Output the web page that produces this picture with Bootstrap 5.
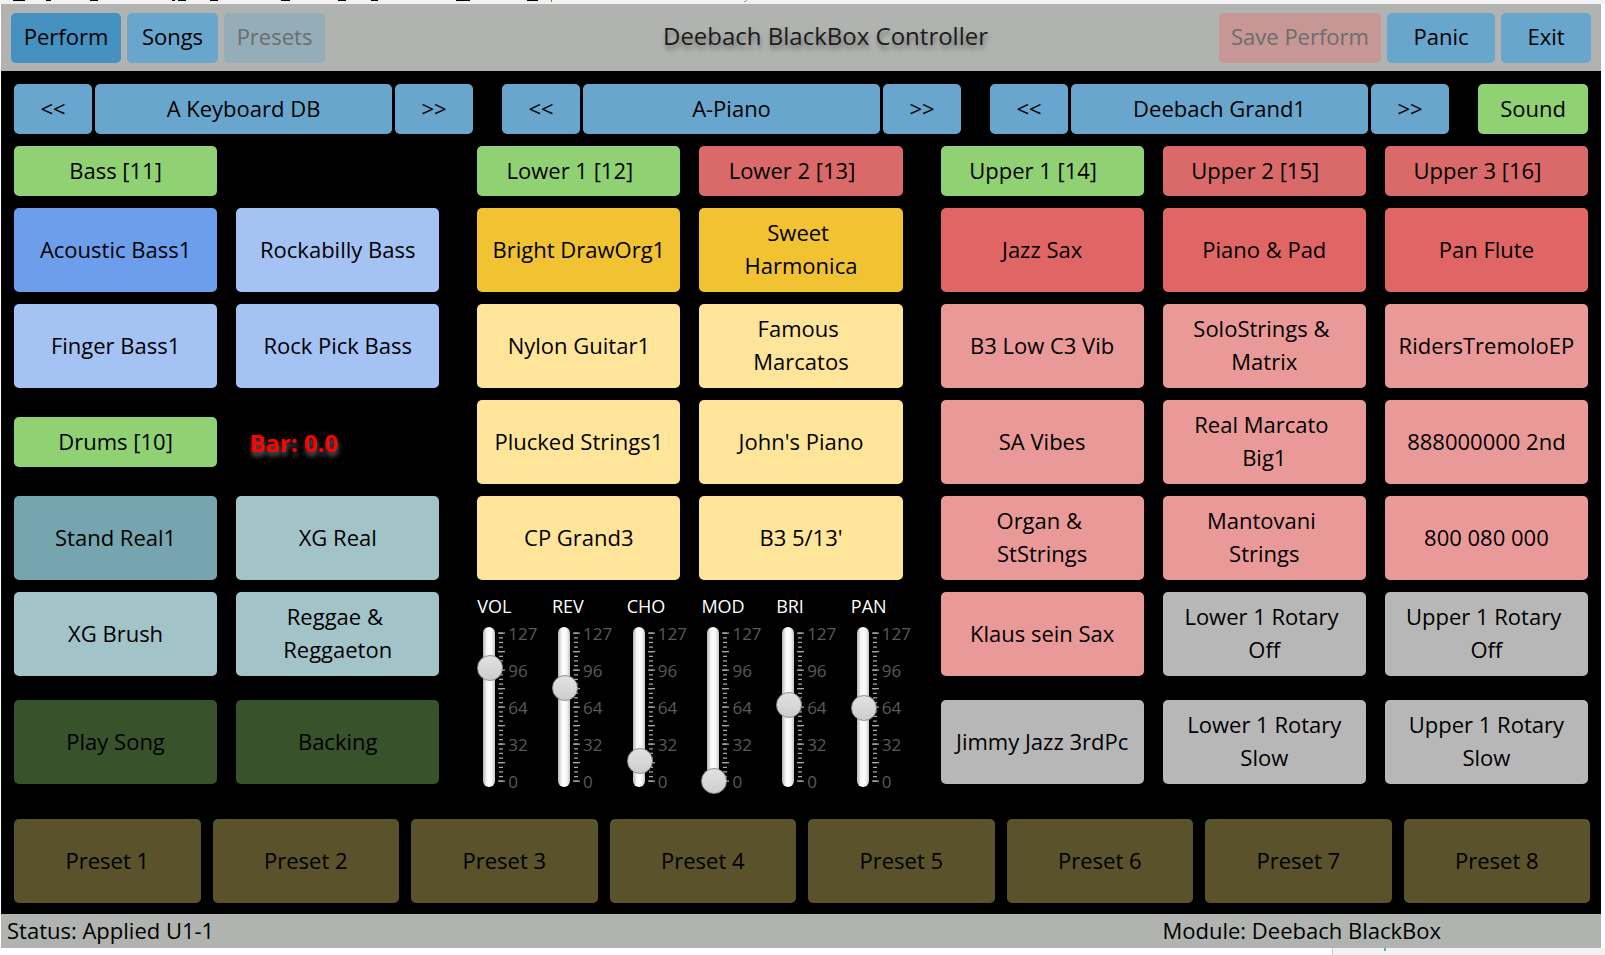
<!DOCTYPE html>
<html lang="en">
<head>
<meta charset="utf-8">
<meta name="viewport" content="width=device-width, initial-scale=1">
<title>Deebach BlackBox Controller</title>
<link href="https://cdn.jsdelivr.net/npm/bootstrap@5.3.0/dist/css/bootstrap.min.css" rel="stylesheet">
<style>
  body { font-family: "Open Sans", "Noto Sans", sans-serif; font-size: 22px; line-height: 33px; color: #000; background: #fff; }
  .backdrop { background: #f2f2f2; height: 4px; overflow: hidden; }
  .backdrop svg { display: block; }
  .app { margin: 0 4px 0 1px; background: #000; }
  .bar { background: #b1b3b0; }
  .topbar { height: 67px; padding: 0 10px; gap: 6px; }
  .title { font-size: 24px; line-height: 33px; padding-left: 107px; padding-bottom: 4px; color: #1c1c1c; text-shadow: 1px 4px 5px rgba(0,0,0,.4); }
  .btn { --bs-btn-font-size: 22px; --bs-btn-line-height: 33px; --bs-btn-border-width: 0; --bs-btn-border-radius: 5px;
         --bs-btn-padding-x: 4px; --bs-btn-padding-y: 0; --bs-btn-color: #000; --bs-btn-hover-color: #000; --bs-btn-active-color: #000;
         --bs-btn-disabled-color: #000; --bs-btn-disabled-opacity: 1;
         --bs-btn-bg: var(--tone); --bs-btn-hover-bg: var(--tone); --bs-btn-active-bg: var(--tone); --bs-btn-disabled-bg: var(--tone);
         min-height: 50px; padding-bottom: 2px; }
  .pad { min-height: 84px; }
  .sky { --tone: #69a6cd; } .sky-on { --tone: #4591c0; }
  .on { --tone: #90d273; } .off { --tone: #da6a6a; }
  .bass { --tone: #a4c2f4; } .bass-on { --tone: #6d9eeb; }
  .drum { --tone: #a2c4c9; } .drum-on { --tone: #76a5af; }
  .low { --tone: #ffe599; } .low-on { --tone: #f1c232; }
  .upp { --tone: #ea9999; } .upp-on { --tone: #e06666; }
  .plain { --tone: #b7b7b7; }
  .song { --tone: #38522c; } .preset { --tone: #59522b; }
  .btn.dim { --tone: #95adb9; --bs-btn-disabled-color: #6b6e6d; }
  .btn.dim-red { --tone: #c69795; }
  .w-a { width: 110px; } .w-b { width: 91px; } .w-c { width: 101px; } .w-d { width: 162px; } .w-e { width: 108px; } .w-f { width: 90px; }
  .selectors { padding: 13px 13px 12px; display: grid; grid-template-columns: 459fr 459fr 459fr 110fr; gap: 29px; }
  .selector { display: grid; grid-template-columns: 78fr 297fr 78fr; gap: 3px; }
  .groups { padding: 0 13px; display: grid; grid-template-columns: 425fr 425fr 647fr; column-gap: 38px; }
  .group { display: grid; grid-template-columns: repeat(2, minmax(0, 1fr)); gap: 12px 19px; align-content: start; }
  .group-wide { grid-template-columns: repeat(3, minmax(0, 1fr)); }
  .last-row { margin-top: 12px; }
  .part { padding-right: 22px; }
  .drum-row { min-height: 84px; }
  .meter { color: #f00; font-size: 24px; font-weight: 700; padding-left: 13px; text-shadow: 1px 4px 5px rgba(255,255,255,.4); }
  .faders { grid-column: span 2; display: grid; grid-template-columns: repeat(6, 1fr); margin-right: -23px; height: 192px; }
  .fader label { display: block; color: #fff; font-size: 18px; line-height: 28px; }
  .well { display: grid; grid-template-columns: 26px 5px 1fr; height: 174px; }
  .slot { display: grid; place-items: center; }
  .slot > * { grid-area: 1 / 1; }
  .groove { width: 12px; height: 160px; border-radius: 6px; background: linear-gradient(90deg, #b5b5b5, #f4f4f4 30%, #fff 50%, #f4f4f4 75%, #c4c4c4); justify-self: start; margin-left: 6px; }
  .slot input { -webkit-appearance: none; appearance: none; width: 174px; height: 26px; margin: 0 -74px; background: transparent; transform: rotate(-90deg); }
  .slot input::-webkit-slider-runnable-track { height: 26px; background: transparent; }
  .slot input::-webkit-slider-thumb { -webkit-appearance: none; width: 26px; height: 26px; border-radius: 50%; border: 1px solid #8f8f8f; background: linear-gradient(90deg, #cdcdcd, #e2e2e2); }
  .ticks { width: 8px; height: 174px; margin-left: -5px; }
  .scale { font-size: 17px; line-height: 18px; color: #5a5a5a; height: 166px; margin-top: 5px; }
  .presets { padding: 35px 11px 11px 13px; display: grid; grid-template-columns: repeat(8, 1fr); gap: 12px; }
  .status { height: 34px; padding-left: 6px; padding-right: 160px; }
  .behind { height: 7px; }
  .behind div { width: 273px; background: #f2f2f2; border-left: 1px solid #ccc; padding-left: 51px; }
  .behind i { display: block; width: 2px; height: 3px; background: #5aa9d6; }
</style>
</head>
<body>
<div class="backdrop">
  <svg width="800" height="4" aria-hidden="true" fill="none" stroke="#000">
    <path d="M13 .5h12M46 .5h5M90 .5h8M172 .5h3M178 .5h8M210 .5h8M281 .5h9M338 .5h8M371 .5h7M456 .5h14M527 .5h11"/>
    <path d="M551.5 0v2" stroke="#a8682c"/><path d="M744 1.5h2M746.500 0v1" stroke="#999"/>
  </svg>
</div>
<div class="app">
  <header class="bar topbar d-flex align-items-center">
    <button class="btn sky-on w-a" type="button">Perform</button>
    <button class="btn sky w-b" type="button">Songs</button>
    <button class="btn dim w-c" type="button" disabled>Presets</button>
    <h1 class="title flex-grow-1 text-center mb-0 fw-normal text-nowrap">Deebach BlackBox Controller</h1>
    <button class="btn dim dim-red w-d text-nowrap" type="button" disabled>Save Perform</button>
    <button class="btn sky w-e" type="button">Panic</button>
    <button class="btn sky w-f" type="button">Exit</button>
  </header>

  <nav class="selectors">
    <div class="selector">
      <button class="btn sky" type="button">&lt;&lt;</button>
      <button class="btn sky" type="button">A Keyboard DB</button>
      <button class="btn sky" type="button">&gt;&gt;</button>
    </div>
    <div class="selector">
      <button class="btn sky" type="button">&lt;&lt;</button>
      <button class="btn sky" type="button">A-Piano</button>
      <button class="btn sky" type="button">&gt;&gt;</button>
    </div>
    <div class="selector">
      <button class="btn sky" type="button">&lt;&lt;</button>
      <button class="btn sky" type="button">Deebach Grand1</button>
      <button class="btn sky" type="button">&gt;&gt;</button>
    </div>
    <button class="btn on" type="button">Sound</button>
  </nav>

  <main class="groups">
    <section class="group">
      <button class="btn on" type="button">Bass [11]</button><span></span>
      <button class="btn pad bass-on" type="button">Acoustic Bass1</button>
      <button class="btn pad bass" type="button">Rockabilly Bass</button>
      <button class="btn pad bass" type="button">Finger Bass1</button>
      <button class="btn pad bass" type="button">Rock Pick Bass</button>
      <div class="drum-row d-flex align-items-center"><button class="btn on w-100" type="button">Drums [10]</button></div>
      <div class="meter d-flex align-items-center">Bar: 0.0</div>
      <button class="btn pad drum-on" type="button">Stand Real1</button>
      <button class="btn pad drum" type="button">XG Real</button>
      <button class="btn pad drum" type="button">XG Brush</button>
      <button class="btn pad drum" type="button">Reggae &amp;&nbsp;<br>Reggaeton</button>
      <button class="btn pad song last-row" type="button" disabled>Play Song</button>
      <button class="btn pad song last-row" type="button" disabled>Backing</button>
    </section>

    <section class="group">
      <button class="btn on part" type="button">Lower 1 [12]</button>
      <button class="btn off part" type="button">Lower 2 [13]</button>
      <button class="btn pad low-on" type="button">Bright DrawOrg1</button>
      <button class="btn pad low-on" type="button">Sweet&nbsp;<br>Harmonica</button>
      <button class="btn pad low" type="button">Nylon Guitar1</button>
      <button class="btn pad low" type="button">Famous&nbsp;<br>Marcatos</button>
      <button class="btn pad low" type="button">Plucked Strings1</button>
      <button class="btn pad low" type="button">John's Piano</button>
      <button class="btn pad low" type="button">CP Grand3</button>
      <button class="btn pad low" type="button">B3 5/13'</button>
      <div class="faders" id="faders"></div>
    </section>

    <section class="group group-wide">
      <button class="btn on part" type="button">Upper 1 [14]</button>
      <button class="btn off part" type="button">Upper 2 [15]</button>
      <button class="btn off part" type="button">Upper 3 [16]</button>
      <button class="btn pad upp-on" type="button">Jazz Sax</button>
      <button class="btn pad upp-on" type="button">Piano &amp; Pad</button>
      <button class="btn pad upp-on" type="button">Pan Flute</button>
      <button class="btn pad upp" type="button">B3 Low C3 Vib</button>
      <button class="btn pad upp" type="button">SoloStrings &amp;&nbsp;<br>Matrix</button>
      <button class="btn pad upp" type="button">RidersTremoloEP</button>
      <button class="btn pad upp" type="button">SA Vibes</button>
      <button class="btn pad upp" type="button">Real Marcato&nbsp;<br>Big1</button>
      <button class="btn pad upp" type="button">888000000 2nd</button>
      <button class="btn pad upp" type="button">Organ &amp;&nbsp;<br>StStrings</button>
      <button class="btn pad upp" type="button">Mantovani&nbsp;<br>Strings</button>
      <button class="btn pad upp" type="button">800 080 000</button>
      <button class="btn pad upp" type="button">Klaus sein Sax</button>
      <button class="btn pad plain" type="button">Lower 1 Rotary&nbsp;<br>Off</button>
      <button class="btn pad plain" type="button">Upper 1 Rotary&nbsp;<br>Off</button>
      <button class="btn pad plain last-row" type="button">Jimmy Jazz 3rdPc</button>
      <button class="btn pad plain last-row" type="button">Lower 1 Rotary<br>Slow</button>
      <button class="btn pad plain last-row" type="button">Upper 1 Rotary<br>Slow</button>
    </section>
  </main>

  <div class="presets">
    <button class="btn pad preset" type="button" disabled>Preset 1</button>
    <button class="btn pad preset" type="button" disabled>Preset 2</button>
    <button class="btn pad preset" type="button" disabled>Preset 3</button>
    <button class="btn pad preset" type="button" disabled>Preset 4</button>
    <button class="btn pad preset" type="button" disabled>Preset 5</button>
    <button class="btn pad preset" type="button" disabled>Preset 6</button>
    <button class="btn pad preset" type="button" disabled>Preset 7</button>
    <button class="btn pad preset" type="button" disabled>Preset 8</button>
  </div>

  <footer class="bar status d-flex justify-content-between">
    <span>Status: Applied U1-1</span>
    <span>Module: Deebach BlackBox</span>
  </footer>
</div>
<div class="behind d-flex justify-content-end"><div><i></i></div></div>

<script src="https://cdn.jsdelivr.net/npm/bootstrap@5.3.0/dist/js/bootstrap.bundle.min.js"></script>
<script>
  const faders = [["VOL", 97], ["REV", 80], ["CHO", 17], ["MOD", 0], ["BRI", 65], ["PAN", 63]];
  document.getElementById("faders").innerHTML = faders.map(([name, value]) => `
    <div class="fader">
      <label for="f-${name}">${name}</label>
      <div class="well">
        <div class="slot"><div class="groove"></div><input type="range" id="f-${name}" min="0" max="127" value="${value}"></div>
        <svg class="ticks" viewBox="0 0 8 174" fill="none" stroke="#a8a8a8" aria-hidden="true">
          <path d="M3 12.5V162" stroke-width="4" stroke-dasharray="1.3 3.325"/>
          <path d="M3.5 12.5V162" stroke-width="7" stroke-dasharray="1.3 17.2"/>
        </svg>
        <div class="scale d-flex flex-column justify-content-between"><span>127</span><span>96</span><span>64</span><span>32</span><span>0</span></div>
      </div>
    </div>`).join("");
</script>
</body>
</html>
